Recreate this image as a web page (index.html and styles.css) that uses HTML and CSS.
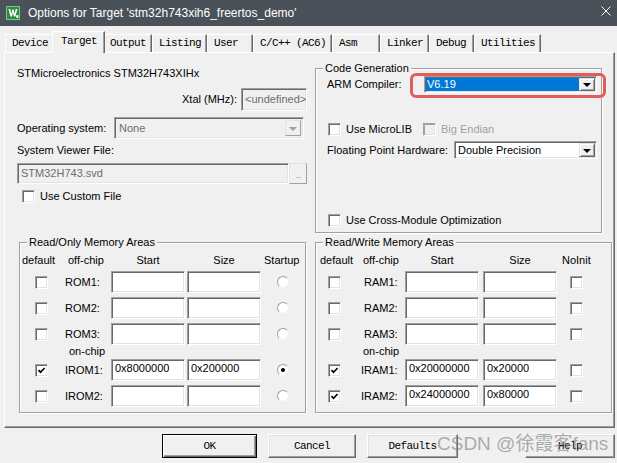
FILE: index.html
```html
<!DOCTYPE html>
<html>
<head>
<meta charset="utf-8">
<title>Options for Target</title>
<link rel="stylesheet" href="styles.css">
</head>
<body>
<div class="window">
  <header class="titlebar">
    <svg class="app-icon" viewBox="0 0 14 14">
      <rect x="0" y="0" width="14" height="14" fill="#2f8a3c"/>
      <rect x="0.5" y="0.5" width="13" height="13" fill="none" stroke="#7cc58a" stroke-width="1"/>
      <path d="M2.5 3 L4.2 3 L5.3 8 L6.3 3.6 L7.6 3.6 L8.6 8 L9.7 3 L11.4 3 L9.4 10.5 L7.9 10.5 L6.95 6.4 L6 10.5 L4.5 10.5 Z" fill="#ffffff"/>
      <rect x="10.2" y="9.2" width="2.2" height="2.6" fill="#ffffff"/>
    </svg>
    <span class="title">Options for Target 'stm32h743xih6_freertos_demo'</span>
    <svg class="close-icon" viewBox="0 0 10 10">
      <path d="M0.5 0.5 L9.5 9.5 M9.5 0.5 L0.5 9.5" stroke="#ffffff" stroke-width="1" fill="none"/>
    </svg>
  </header>

  <nav class="tabs">
    <span class="tab">Device</span>
    <span class="tab tab-active">Target</span>
    <span class="tab">Output</span>
    <span class="tab">Listing</span>
    <span class="tab tab-user">User</span>
    <span class="tab">C/C++ (AC6)</span>
    <span class="tab tab-asm">Asm</span>
    <span class="tab">Linker</span>
    <span class="tab">Debug</span>
    <span class="tab">Utilities</span>
  </nav>

  <main class="panel">
    <section class="top">
      <div class="device">
        <div class="dev-name">STMicroelectronics STM32H743XIHx</div>
        <div class="xtal-row">
          <span>Xtal (MHz):</span>
          <span class="field field-disabled field-xtal">&lt;undefined&gt;</span>
        </div>
        <div class="os-row">
          <span class="os-label">Operating system:</span>
          <div class="combo combo-disabled combo-os">
            <span class="combo-value">None</span>
            <span class="combo-btn"><i class="arrow"></i></span>
          </div>
        </div>
        <div class="svf-label">System Viewer File:</div>
        <div class="svf-row">
          <span class="field field-disabled field-svf">STM32H743.svd</span>
          <span class="browse-btn">...</span>
        </div>
        <div class="check-row custom-row">
          <span class="checkbox"></span>
          <span>Use Custom File</span>
        </div>
      </div>

      <div class="group codegen">
        <span class="legend">Code Generation</span>
        <div class="cg-row arm-row">
          <span>ARM Compiler:</span>
          <div class="combo combo-arm">
            <span class="combo-value combo-selected">V6.19</span>
            <span class="combo-btn"><i class="arrow"></i></span>
          </div>
        </div>
        <div class="cg-checks">
          <div class="check-row microlib">
            <span class="checkbox"></span>
            <span>Use MicroLIB</span>
          </div>
          <div class="check-row">
            <span class="checkbox checkbox-disabled"></span>
            <span class="disabled-text">Big Endian</span>
          </div>
        </div>
        <div class="cg-row fph-row">
          <span>Floating Point Hardware:</span>
          <div class="combo combo-fph">
            <span class="combo-value">Double Precision</span>
            <span class="combo-btn"><i class="arrow"></i></span>
          </div>
        </div>
        <div class="check-row cross-row">
          <span class="checkbox"></span>
          <span>Use Cross-Module Optimization</span>
        </div>
      </div>
    </section>

    <section class="memory">
      <div class="group mem rom">
        <span class="legend">Read/Only Memory Areas</span>
        <div class="mem-grid">
          <span class="hdr hdr-default">default</span>
          <span class="hdr hdr-chip">off-chip</span>
          <span class="hdr hdr-center">Start</span>
          <span class="hdr hdr-center">Size</span>
          <span class="hdr hdr-last">Startup</span>

          <span class="cell c-check"><span class="checkbox"></span></span>
          <span class="cell c-label">ROM1:</span>
          <span class="field mem-field"></span>
          <span class="field mem-field"></span>
          <span class="cell c-last"><span class="radio"></span></span>

          <span class="cell c-check"><span class="checkbox"></span></span>
          <span class="cell c-label">ROM2:</span>
          <span class="field mem-field"></span>
          <span class="field mem-field"></span>
          <span class="cell c-last"><span class="radio"></span></span>

          <span class="cell c-check"><span class="checkbox"></span></span>
          <span class="cell c-label">ROM3:</span>
          <span class="field mem-field"></span>
          <span class="field mem-field"></span>
          <span class="cell c-last"><span class="radio"></span></span>

          <span class="onchip">on-chip</span>

          <span class="cell c-check"><span class="checkbox checked"><svg viewBox="0 0 9 9"><path d="M1.5 4.2 L3.5 6.3 L7.6 2" stroke="#000" stroke-width="1.7" fill="none"/></svg></span></span>
          <span class="cell c-label">IROM1:</span>
          <span class="field mem-field">0x8000000</span>
          <span class="field mem-field">0x200000</span>
          <span class="cell c-last"><span class="radio radio-on"></span></span>

          <span class="cell c-check"><span class="checkbox"></span></span>
          <span class="cell c-label">IROM2:</span>
          <span class="field mem-field"></span>
          <span class="field mem-field"></span>
          <span class="cell c-last"><span class="radio"></span></span>
        </div>
      </div>

      <div class="group mem ram">
        <span class="legend">Read/Write Memory Areas</span>
        <div class="mem-grid">
          <span class="hdr hdr-default">default</span>
          <span class="hdr hdr-chip">off-chip</span>
          <span class="hdr hdr-center">Start</span>
          <span class="hdr hdr-center">Size</span>
          <span class="hdr hdr-last">NoInit</span>

          <span class="cell c-check"><span class="checkbox"></span></span>
          <span class="cell c-label">RAM1:</span>
          <span class="field mem-field"></span>
          <span class="field mem-field"></span>
          <span class="cell c-last"><span class="checkbox"></span></span>

          <span class="cell c-check"><span class="checkbox"></span></span>
          <span class="cell c-label">RAM2:</span>
          <span class="field mem-field"></span>
          <span class="field mem-field"></span>
          <span class="cell c-last"><span class="checkbox"></span></span>

          <span class="cell c-check"><span class="checkbox"></span></span>
          <span class="cell c-label">RAM3:</span>
          <span class="field mem-field"></span>
          <span class="field mem-field"></span>
          <span class="cell c-last"><span class="checkbox"></span></span>

          <span class="onchip">on-chip</span>

          <span class="cell c-check"><span class="checkbox checked"><svg viewBox="0 0 9 9"><path d="M1.5 4.2 L3.5 6.3 L7.6 2" stroke="#000" stroke-width="1.7" fill="none"/></svg></span></span>
          <span class="cell c-label c-label-i">IRAM1:</span>
          <span class="field mem-field">0x20000000</span>
          <span class="field mem-field">0x20000</span>
          <span class="cell c-last"><span class="checkbox"></span></span>

          <span class="cell c-check"><span class="checkbox checked"><svg viewBox="0 0 9 9"><path d="M1.5 4.2 L3.5 6.3 L7.6 2" stroke="#000" stroke-width="1.7" fill="none"/></svg></span></span>
          <span class="cell c-label c-label-i">IRAM2:</span>
          <span class="field mem-field">0x24000000</span>
          <span class="field mem-field">0x80000</span>
          <span class="cell c-last"><span class="checkbox"></span></span>
        </div>
      </div>
    </section>
  </main>

  <footer class="buttons">
    <button class="btn btn-default btn-ok">OK</button>
    <button class="btn btn-cancel">Cancel</button>
    <button class="btn btn-defaults">Defaults</button>
    <button class="btn btn-help">Help</button>
  </footer>

  <div class="highlight"></div>
  <div class="watermark">CSDN @徐霞客fans</div>
</div>
</body>
</html>
```

FILE: styles.css
```css
* {
  box-sizing: border-box;
}

html,
body {
  margin: 0;
  padding: 0;
}

body {
  width: 617px;
  height: 463px;
  overflow: hidden;
  background: #f0f0f0;
  font-family: "Liberation Sans", Arial, sans-serif;
  font-size: 11px;
  line-height: 13px;
  color: #000;
}

.window {
  position: relative;
  width: 617px;
  height: 463px;
}

/* ---------- title bar ---------- */
.titlebar {
  height: 26px;
  background: #4a5158;
  color: #fff;
  display: flex;
  align-items: center;
}

.app-icon {
  width: 14px;
  height: 14px;
  margin-left: 6px;
  flex: none;
}

.title {
  margin-left: 8px;
  font-size: 12px;
  line-height: 16px;
}

.close-icon {
  width: 10px;
  height: 10px;
  margin-left: auto;
  margin-right: 6px;
  margin-top: -4px;
}

/* ---------- tabs ---------- */
.tabs {
  height: 26px;
  display: flex;
  align-items: flex-end;
  padding-left: 5px;
}

.tab {
  font-family: "Liberation Mono", "Courier New", monospace;
  font-size: 11px;
  letter-spacing: -0.6px;
  height: 18px;
  line-height: 15px;
  padding: 1px 5px 0 6px;
  min-width: 45px;
  border-top: 1px solid #fff;
  border-left: 1px solid #fff;
  border-right: 1px solid #696969;
  box-shadow: inset -1px 0 0 #a0a0a0;
  white-space: pre;
  background: #f0f0f0;
}

.tab-user {
  min-width: 46px;
}

.tab-asm {
  min-width: 48px;
}

.tab-active {
  position: relative;
  z-index: 2;
  height: 22px;
  margin: 0 -2px -1px -2px;
  padding: 2px 7px 0 8px;
}

/* ---------- main panel ---------- */
.panel {
  margin-left: 4px;
  width: 611px;
  height: 376px;
  border: 1px solid;
  border-color: #fff #696969 #696969 #fff;
  box-shadow: inset -1px -1px 0 #a0a0a0;
  display: flex;
  flex-direction: column;
}

.top {
  display: flex;
  height: 189px;
}

.device {
  width: 305px;
  padding-top: 14px;
  padding-left: 12px;
  display: flex;
  flex-direction: column;
}

.dev-name {
  height: 13px;
}

.xtal-row {
  margin-top: 8px;
  display: flex;
  justify-content: flex-end;
  align-items: center;
  gap: 4px;
  padding-right: 3px;
  height: 23px;
}

.os-row {
  margin-top: 6px;
  display: flex;
  align-items: center;
  height: 22px;
}

.os-label {
  width: 97px;
}

.svf-label {
  margin-top: 5px;
  height: 13px;
}

.svf-row {
  margin-top: 6px;
  display: flex;
  height: 21px;
}

.custom-row {
  margin-top: 6px;
  margin-left: 5px;
}

/* ---------- inputs ---------- */
.field {
  display: block;
  background: #fff;
  border: 1px solid;
  border-color: #a0a0a0 #fff #fff #a0a0a0;
  box-shadow: inset 1px 1px 0 #696969, inset -1px -1px 0 #e3e3e3;
  padding: 2px 3px 0 3px;
  white-space: nowrap;
  overflow: hidden;
}

.field-disabled {
  background: #f0f0f0;
  color: #6d6d6d;
}

.field-xtal {
  width: 66px;
  height: 23px;
  padding-top: 4px;
  padding-left: 3px;
}

.field-svf {
  width: 272px;
  height: 21px;
  padding-top: 3px;
  padding-left: 3px;
}

.browse-btn {
  width: 18px;
  height: 21px;
  border: 1px solid;
  border-color: #e3e3e3 #a0a0a0 #a0a0a0 #e3e3e3;
  color: #a0a0a0;
  font-size: 9px;
  line-height: 18px;
  text-align: center;
  letter-spacing: -1px;
  padding-top: 2px;
}

.mem-field {
  width: 74px;
  height: 22px;
}

/* ---------- combo boxes ---------- */
.combo {
  display: flex;
  border: 1px solid;
  border-color: #a0a0a0 #fff #fff #a0a0a0;
  box-shadow: inset 1px 1px 0 #696969, inset -1px -1px 0 #e3e3e3;
  background: #fff;
  padding: 2px 2px 2px 2px;
}

.combo-value {
  flex: 1;
  padding-left: 2px;
  white-space: nowrap;
  display: flex;
  align-items: center;
}

.combo-selected {
  background: #0078d7;
  color: #fff;
  padding-left: 1px;
}

.combo-btn {
  width: 16px;
  flex: none;
  background: #f0f0f0;
  border: 1px solid;
  border-color: #e3e3e3 #696969 #696969 #e3e3e3;
  box-shadow: inset 1px 1px 0 #fff, inset -1px -1px 0 #a0a0a0;
  display: flex;
  align-items: center;
  justify-content: center;
}

.arrow {
  display: block;
  width: 0;
  height: 0;
  border-top: 4px solid #000;
  border-left: 4px solid transparent;
  border-right: 4px solid transparent;
  margin-top: 1px;
}

.combo-disabled {
  background: #f0f0f0;
  color: #6d6d6d;
}

.combo-disabled .combo-btn {
  border-color: #e3e3e3 #a0a0a0 #a0a0a0 #e3e3e3;
  box-shadow: none;
}

.combo-disabled .arrow {
  border-top-color: #a0a0a0;
}

.combo-os {
  width: 190px;
  height: 22px;
}

.combo-arm {
  width: 173px;
  height: 17px;
  padding: 1px;
}

.combo-fph {
  width: 143px;
  height: 18px;
  padding: 1px;
}

/* ---------- checkboxes / radios ---------- */
.check-row {
  display: flex;
  align-items: center;
  gap: 5px;
  height: 13px;
}

.checkbox {
  display: inline-flex;
  align-items: center;
  justify-content: center;
  width: 13px;
  height: 13px;
  flex: none;
  background: #fff;
  border: 1px solid;
  border-color: #a0a0a0 #fff #fff #a0a0a0;
  box-shadow: inset 1px 1px 0 #696969, inset -1px -1px 0 #e3e3e3;
}

.checkbox svg {
  width: 9px;
  height: 9px;
}

.checkbox-disabled {
  background: #f0f0f0;
  box-shadow: inset 1px 1px 0 #a0a0a0, inset -1px -1px 0 #e3e3e3;
}

.disabled-text {
  color: #a0a0a0;
}

.radio {
  display: inline-flex;
  align-items: center;
  justify-content: center;
  width: 12px;
  height: 12px;
  border-radius: 50%;
  background: #fff;
  border: 1px solid;
  border-color: #a0a0a0 #f0f0f0 #f0f0f0 #a0a0a0;
}

.radio-on::after {
  content: "";
  width: 4px;
  height: 4px;
  border-radius: 50%;
  background: #000;
}

/* ---------- group boxes ---------- */
.group {
  position: relative;
  border: 1px solid #a0a0a0;
  box-shadow: inset 1px 1px 0 #fff, 1px 1px 0 #fff;
}

.legend {
  position: absolute;
  top: -7px;
  left: 7px;
  padding: 0 2px;
  background: #f0f0f0;
  line-height: 13px;
  white-space: nowrap;
}

.codegen {
  margin-left: 5px;
  margin-top: 15px;
  width: 287px;
  height: 165px;
  padding: 7px 4px 0 11px;
  display: flex;
  flex-direction: column;
}

.cg-row {
  display: flex;
  justify-content: space-between;
  align-items: center;
}

.arm-row {
  height: 17px;
}

.cg-checks {
  margin-top: 30px;
  padding-left: 1px;
  display: flex;
}

.microlib {
  width: 95px;
}

.fph-row {
  margin-top: 5px;
  height: 18px;
}

.cross-row {
  margin-top: 55px;
  padding-left: 1px;
}

/* ---------- memory areas ---------- */
.memory {
  display: flex;
}

.mem {
  height: 171px;
  padding-top: 11px;
}

.rom {
  margin-left: 14px;
  width: 287px;
}

.ram {
  margin-left: 9px;
  width: 297px;
}

.mem-grid {
  display: grid;
  grid-template-rows: 17px 26px 26px 22px 14px 26px 22px;
  align-items: start;
}

.rom .mem-grid {
  grid-template-columns: 41px 50px 76px 74px 1fr;
}

.ram .mem-grid {
  grid-template-columns: 42px 47px 78px 78px 1fr;
}

.hdr {
  white-space: nowrap;
}

.hdr-center {
  width: 74px;
  text-align: center;
}

.rom .hdr-default {
  padding-left: 2px;
}

.ram .hdr-default {
  padding-left: 4px;
}

.rom .hdr-chip {
  padding-left: 7px;
}

.ram .hdr-chip {
  padding-left: 5px;
}

.rom .hdr-last {
  padding-left: 3px;
}

.ram .hdr-last {
  padding-left: 1px;
}

.cell {
  height: 22px;
  display: flex;
  align-items: center;
}

.rom .c-check {
  padding-left: 15px;
}

.ram .c-check {
  padding-left: 12px;
}

.rom .c-label {
  padding-left: 4px;
}

.ram .c-label {
  padding-left: 6px;
}

.ram .c-label-i {
  padding-left: 3px;
}

.rom .c-last {
  padding-left: 16px;
}

.ram .c-last {
  padding-left: 9px;
}

.onchip {
  grid-column: 1 / -1;
  white-space: nowrap;
}

.rom .onchip {
  padding-left: 49px;
}

.ram .onchip {
  padding-left: 47px;
}

/* ---------- buttons ---------- */
.buttons {
  display: flex;
  margin-top: 6px;
  padding-left: 162px;
  height: 24px;
}

.btn {
  font-family: "Liberation Mono", "Courier New", monospace;
  font-size: 11px;
  letter-spacing: -0.6px;
  height: 24px;
  padding: 0;
  background: #f0f0f0;
  color: #000;
  border: 1px solid;
  border-color: #fff #696969 #696969 #fff;
  box-shadow: inset -1px -1px 0 #a0a0a0, inset 1px 1px 0 #e3e3e3;
}

.btn-default {
  border-color: #000;
  box-shadow: inset 1px 1px 0 #fff, inset -1px -1px 0 #696969, inset -2px -2px 0 #a0a0a0;
}

.btn-ok {
  width: 95px;
}

.btn-cancel {
  width: 88px;
  margin-left: 11px;
}

.btn-defaults {
  width: 91px;
  margin-left: 11px;
}

.btn-help {
  width: 90px;
  margin-left: 67px;
}

/* ---------- overlays ---------- */
.highlight {
  position: absolute;
  left: 410px;
  top: 73px;
  width: 196px;
  height: 25px;
  border: 3px solid #e25c5e;
  border-radius: 6px;
}

.watermark {
  position: absolute;
  left: 437px;
  top: 433px;
  font-family: "Liberation Sans", "Noto Sans CJK SC", sans-serif;
  font-size: 19px;
  line-height: 22px;
  color: rgba(130, 130, 130, 0.65);
  white-space: nowrap;
}
```
